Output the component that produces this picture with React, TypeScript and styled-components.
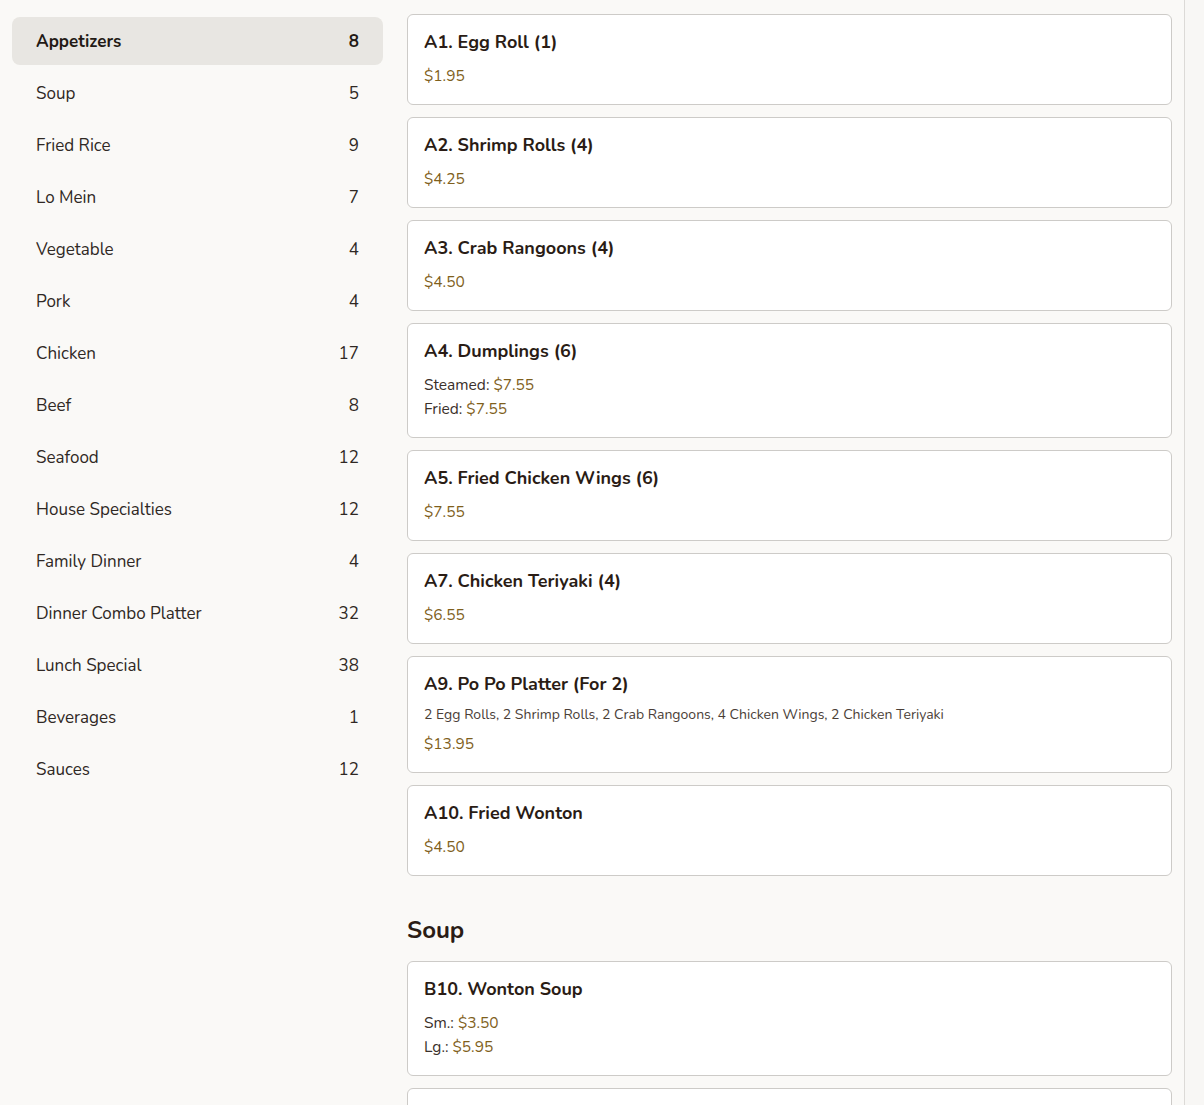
import React from 'react';
import styled, { createGlobalStyle } from 'styled-components';

const GlobalStyle = createGlobalStyle`
  html, body {
    margin: 0;
    padding: 0;
    background: #faf9f7;
    font-family: "Nunito", "Lato", "Noto Sans", sans-serif;
    color: #2a1f1a;
  }
  * { box-sizing: border-box; }
`;

const Layout = styled.div`
  display: grid;
  grid-template-columns: 395px 1fr 20px;
  height: 100vh;
`;

const Sidebar = styled.nav`
  padding: 17px 12px;
  display: flex;
  flex-direction: column;
  gap: 4px;
`;

const CategoryItem = styled.a<{ $active?: boolean }>`
  display: flex;
  justify-content: space-between;
  align-items: center;
  height: 48px;
  padding: 0 24px;
  border-radius: 8px;
  font-size: 17px;
  font-weight: ${p => (p.$active ? 700 : 400)};
  color: ${p => (p.$active ? '#231a15' : '#2f2824')};
  background: ${p => (p.$active ? '#e8e6e2' : 'transparent')};
  cursor: pointer;
`;

const Main = styled.main`
  overflow-y: hidden;
  padding: 14px 12px 40px;
`;

const ScrollGutter = styled.div`
  background: #f8f7f5;
  border-left: 1px solid #dcdad7;
`;

const Section = styled.section`
  & + & {
    margin-top: 38px;
  }
`;

const SectionTitle = styled.h2`
  margin: 0 0 15px;
  font-size: 24px;
  line-height: 32px;
  font-weight: 700;
  color: #2a1c15;
`;

const CardList = styled.div`
  display: flex;
  flex-direction: column;
  gap: 12px;
`;

const Card = styled.div`
  background: #ffffff;
  border: 1px solid #cdcbc8;
  border-radius: 6px;
  padding: 15px 16px 16px;
`;

const ItemName = styled.div`
  font-size: 18px;
  line-height: 24px;
  font-weight: 700;
  color: #2a1c15;
`;

const Description = styled.div`
  margin-top: 9px;
  font-size: 14px;
  line-height: 20px;
  color: #4a3e37;
`;

const Prices = styled.div<{ $tight?: boolean }>`
  margin-top: ${p => (p.$tight ? '7px' : '10px')};
`;

const PriceLine = styled.div`
  font-size: 15.5px;
  line-height: 24px;
  color: #3a302a;
`;

const Price = styled.span`
  color: #7f5f1c;
`;

type Item = {
  name: string;
  description?: string;
  prices: { label?: string; value: string }[];
};

type Category = { name: string; count: number; items?: Item[] };

const categories: Category[] = [
  {
    name: 'Appetizers',
    count: 8,
    items: [
      { name: 'A1. Egg Roll (1)', prices: [{ value: '$1.95' }] },
      { name: 'A2. Shrimp Rolls (4)', prices: [{ value: '$4.25' }] },
      { name: 'A3. Crab Rangoons (4)', prices: [{ value: '$4.50' }] },
      {
        name: 'A4. Dumplings (6)',
        prices: [
          { label: 'Steamed', value: '$7.55' },
          { label: 'Fried', value: '$7.55' },
        ],
      },
      { name: 'A5. Fried Chicken Wings (6)', prices: [{ value: '$7.55' }] },
      { name: 'A7. Chicken Teriyaki (4)', prices: [{ value: '$6.55' }] },
      {
        name: 'A9. Po Po Platter (For 2)',
        description:
          '2 Egg Rolls, 2 Shrimp Rolls, 2 Crab Rangoons, 4 Chicken Wings, 2 Chicken Teriyaki',
        prices: [{ value: '$13.95' }],
      },
      { name: 'A10. Fried Wonton', prices: [{ value: '$4.50' }] },
    ],
  },
  {
    name: 'Soup',
    count: 5,
    items: [
      {
        name: 'B10. Wonton Soup',
        prices: [
          { label: 'Sm.', value: '$3.50' },
          { label: 'Lg.', value: '$5.95' },
        ],
      },
      {
        name: 'B11. Egg Drop Soup',
        prices: [
          { label: 'Sm.', value: '$3.25' },
          { label: 'Lg.', value: '$5.50' },
        ],
      },
      {
        name: 'B12. Hot & Sour Soup',
        prices: [
          { label: 'Sm.', value: '$3.50' },
          { label: 'Lg.', value: '$5.95' },
        ],
      },
    ],
  },
  { name: 'Fried Rice', count: 9 },
  { name: 'Lo Mein', count: 7 },
  { name: 'Vegetable', count: 4 },
  { name: 'Pork', count: 4 },
  { name: 'Chicken', count: 17 },
  { name: 'Beef', count: 8 },
  { name: 'Seafood', count: 12 },
  { name: 'House Specialties', count: 12 },
  { name: 'Family Dinner', count: 4 },
  { name: 'Dinner Combo Platter', count: 32 },
  { name: 'Lunch Special', count: 38 },
  { name: 'Beverages', count: 1 },
  { name: 'Sauces', count: 12 },
];

function MenuCard({ item }: { item: Item }) {
  return (
    <Card>
      <ItemName>{item.name}</ItemName>
      {item.description && <Description>{item.description}</Description>}
      <Prices $tight={!!item.description}>
        {item.prices.map((p, i) => (
          <PriceLine key={i}>
            {p.label && <>{p.label}: </>}
            <Price>{p.value}</Price>
          </PriceLine>
        ))}
      </Prices>
    </Card>
  );
}

export default function App() {
  const withItems = categories.filter(c => c.items);

  return (
    <>
      <GlobalStyle />
      <Layout>
        <Sidebar>
          {categories.map((c, i) => (
            <CategoryItem key={c.name} $active={i === 0}>
              <span>{c.name}</span>
              <span>{c.count}</span>
            </CategoryItem>
          ))}
        </Sidebar>
        <Main>
          {withItems.map((c, i) => (
            <Section key={c.name}>
              {i > 0 && <SectionTitle>{c.name}</SectionTitle>}
              <CardList>
                {c.items!.map(item => (
                  <MenuCard key={item.name} item={item} />
                ))}
              </CardList>
            </Section>
          ))}
        </Main>
        <ScrollGutter />
      </Layout>
    </>
  );
}
